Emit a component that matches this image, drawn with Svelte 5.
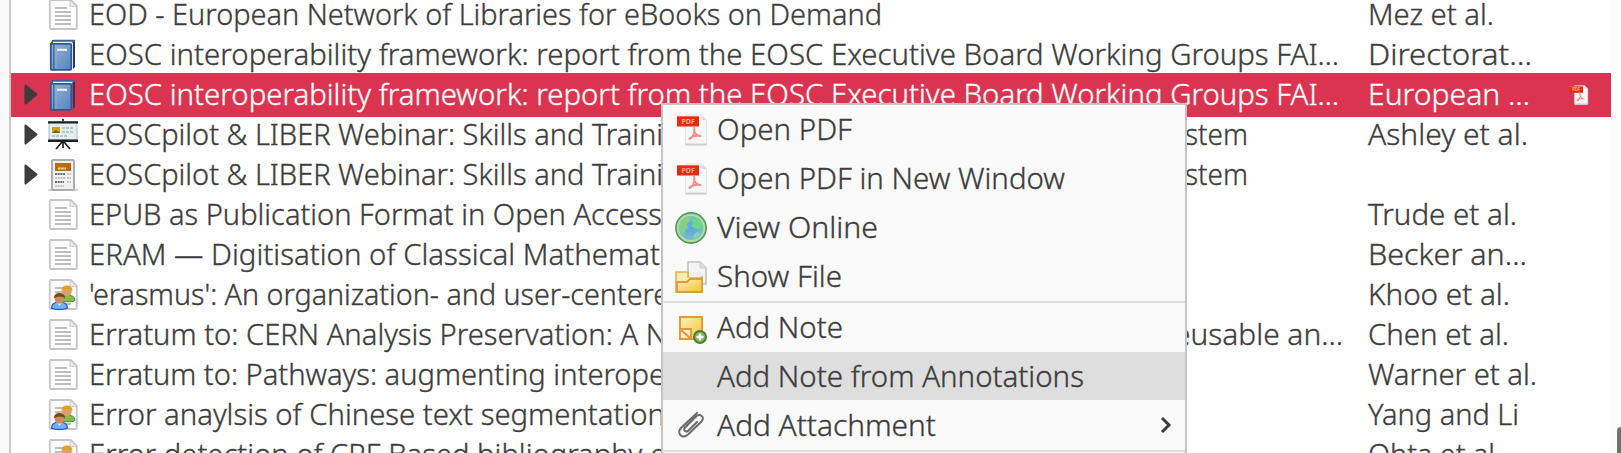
<script>
  // Each title is a list of visible runs: [text, start x inside the title column, ink width]
  const rows = [
    { icon: 'doc', runs: [['EOD - European Network of Libraries for eBooks on Demand', 0, 793]], by: ['Mez et al.', 126] },
    { icon: 'book', runs: [['EOSC interoperability framework: report from the EOSC Executive Board Working Groups FAI…', 0, 1250]], by: ['Directorat…', 164] },
    { icon: 'book', open: true, selected: true, pdf: true, runs: [['EOSC interoperability framework: report from the EOSC Executive Board Working Groups FAI…', 0, 1250]], by: ['European …', 162] },
    { icon: 'slides', open: true, runs: [['EOSCpilot & LIBER Webinar: Skills and Traini', 0, 574], ['stem', 1096, 63]], by: ['Ashley et al.', 160] },
    { icon: 'report', open: true, runs: [['EOSCpilot & LIBER Webinar: Skills and Traini', 0, 574], ['stem', 1096, 63]] },
    { icon: 'doc', runs: [['EPUB as Publication Format in Open Access', 0, 573]], by: ['Trude et al.', 149] },
    { icon: 'doc', runs: [['ERAM — Digitisation of Classical Mathemat', 0, 571]], by: ['Becker an…', 159] },
    { icon: 'people', runs: [["'erasmus': An organization- and user-centere", 0, 580]], by: ['Khoo et al.', 142] },
    { icon: 'doc', runs: [['Erratum to: CERN Analysis Preservation: A N', 0, 578], ['eusable an…', 1085, 169]], by: ['Chen et al.', 141] },
    { icon: 'doc', runs: [['Erratum to: Pathways: augmenting interope', 0, 576]], by: ['Warner et al.', 169] },
    { icon: 'people', runs: [['Error anaylsis of Chinese text segmentation', 0, 576]], by: ['Yang and Li', 151] },
    { icon: 'people', runs: [['Error detection of CRF Based bibliography e', 0, 577]], by: ['Ohta et al.', 134] }
  ];

  const menu = [
    { icon: 'pdf', label: 'Open PDF', w: 135 },
    { icon: 'pdf', label: 'Open PDF in New Window', w: 348 },
    { icon: 'globe', label: 'View Online', w: 161 },
    { icon: 'folder', label: 'Show File', w: 125 },
    { sep: true },
    { icon: 'note', label: 'Add Note', w: 126 },
    { label: 'Add Note from Annotations', w: 367, active: true },
    { icon: 'clip', label: 'Add Attachment', w: 219, more: true },
    { sep: true, last: true }
  ];

  // Condenses a run horizontally to the given width
  function fit(node, w) {
    node.style.transform = `scaleX(${w / node.getBoundingClientRect().width})`;
  }
</script>

{#snippet page()}
  <path d="M2 1h19l6 6v22a1 1 0 0 1-1 1H1a1 1 0 0 1-1-1V2a1 1 0 0 1 1-1z" transform="translate(.8 0)" fill="#fcfcfc" stroke="#c6c6c6" stroke-width="1.8" />
  <path d="M21 1.500v6h6" fill="#e8e8e8" stroke="#cfcfcf" stroke-width="1.200" />
  <path d="M6 9h12M6 13h16M6 17h16M6 21h16M6 25h16" stroke="#bdbdbd" stroke-width="1.800" />
{/snippet}

{#snippet pdf()}
  <path d="M9 1h16l5 5v24a1 1 0 0 1-1 1H10a1 1 0 0 1-1-1z" fill="#f7f7f7" stroke="#e2e2e2" />
  <path d="M25 1v5h5z" fill="#dcdcdc" />
  <path d="M9 30.500h21" stroke="#cdcdcd" stroke-width="1.800" />
  <rect x="0.500" y="2" width="22" height="10.500" fill="#e62a0c" />
  <path d="M.5 2.500h22" stroke="#f26b55" />
  <text x="5" y="9.800" class="tag">PDF</text>
  <path d="M17.500 13c1 4 .5 6.500-1.500 9.500-1 1.500-2 2.500-3 2.500M17.500 17c1 3 3.500 4.500 6.500 5M13.500 24c3-2 6-2.800 10.500-2" fill="none" stroke="#f3908a" stroke-width="2" stroke-linecap="round" />
{/snippet}

{#snippet icon(name)}
  <svg class="icon" viewBox="0 0 32 32" width="32" height="32">
    {#if name === 'doc'}
      <g transform="translate(2 0)">{@render page()}</g>
    {:else if name === 'people'}
      <g transform="translate(2 0)">{@render page()}</g>
      <path d="M15 22c0-4 3-6 6-6s7 1.500 7 5.500l-3 1.200h-9z" fill="#7fba52" stroke="#4f8a2b" />
      <circle cx="20" cy="12.500" r="4.800" fill="#d9a06a" />
      <path d="M14.500 12c0-4.500 3-5.500 5.500-5.500s5.500 1 5.500 5.500c-2-2.500-8-2.500-11 0z" fill="#e2a21f" />
      <path d="M4.500 29.300c0-4.500 3-6.300 8-6.300s8 1.800 8 6.300q-8 2.500-16 0z" fill="#6fb2f5" stroke="#2456b8" stroke-width="1.200" />
      <path d="M9.500 23l3 3.500 3-3.500z" fill="#fff" />
      <circle cx="12.500" cy="20" r="4.800" fill="#c98f63" />
      <path d="M7 19.500c0-4.500 3-5.500 5.500-5.500s5.500 1 5.500 5.500c-2-2.500-8-2.500-11 0z" fill="#7c4a14" />
    {:else if name === 'book'}
      <g transform="translate(1 0)">
        <path d="M4 1h23v27l-2 2V4H4z" fill="#243c5e" />
        <path d="M2 5.500V4L5.500.8H27v2z" fill="#3c6396" />
        <path d="M5 2.800h20l-1.500 2H5z" fill="#f0f1f2" />
        <rect x="2.800" y="4.800" width="20.500" height="26" rx="1" fill="url(#cover)" stroke="#33588f" stroke-width="1.800" />
        <path d="M5.800 6v24" stroke="#426ca3" stroke-width="1.500" />
        <path d="M8 6v23" stroke="#8aacd4" />
        <path d="M9 10.800h10" stroke="#f2f6fb" stroke-width="2" />
      </g>
    {:else if name === 'slides'}
      <g transform="translate(1 0)">
        <rect x="1" y="3" width="28" height="18" fill="#e2efee" stroke="#aabab9" />
        <path d="M0 3.400h30M0 21.700h30" stroke="#202020" stroke-width="2.400" />
        <path d="M15 0v3" stroke="#444" stroke-width="2" />
        <rect x="4" y="8" width="8" height="6" fill="#c9a20a" />
        <path d="M4 14l4-3 4 3z" fill="#765f12" />
        <path d="M14 9h12M14 13h12M4 17h16" stroke="#b4c6c5" stroke-width="2" stroke-dasharray="3 1" />
        <path d="M15 22v7M14 23l-6 7M16 23l6 7" stroke="#202020" stroke-width="1.700" />
      </g>
    {:else if name === 'report'}
      <path d="M1 31h30" stroke="#d4d4d4" stroke-width="2" />
      <rect x="5" y="1" width="22" height="30" rx="1" fill="#f1f1f1" stroke="#acacac" stroke-width="2" />
      <rect x="8" y="4" width="16" height="8" fill="#b96c0b" />
      <path d="M11 9.500h8" stroke="#f5dcae" stroke-width="2" stroke-dasharray="2.500 .7" />
      <path d="M8 15h10M8 23h9" stroke="#6a6a6a" stroke-width="1.800" stroke-dasharray="2 .7" />
      <path d="M8 19h10M8 27h9M20 15h4M20 19h4M20 23h4" stroke="#c4c4c4" stroke-width="2" stroke-dasharray="2 .7" />
    {:else if name === 'pdf'}
      <g transform="translate(1.500 0)">{@render pdf()}</g>
    {:else if name === 'globe'}
      <circle cx="16" cy="16" r="15" fill="url(#sea)" stroke="#51985a" stroke-width="1.800" />
      <circle cx="16" cy="16" r="13.200" fill="none" stroke="#b0dba0" stroke-width="2.200" />
      <path d="M5 12c2-5 6-8 10-8l1 4-4 4 1 4-3 2-1 6c-4-3-5-8-4-12z" fill="#83d08a" />
      <path d="M17 8c5-3 9 2 10 6-2 4-5 3-7 2l-4-2 3-2z" fill="#65de80" />
      <path d="M22 20l3 1-3 4-3 2-1-3z" fill="#8cd4a0" />
    {:else if name === 'folder'}
      <path d="M13 1h12l6 6v16H13z" fill="#f4f4f4" stroke="#c2c2c2" stroke-width="1.600" />
      <path d="M25 1v6h6" fill="#ddd" stroke="#c8c8c8" />
      <path d="M1 31V11h12v5h14v15z" fill="#faeab0" stroke="#e0b34d" stroke-width="1.700" />
      <path d="M14 11h12v5H14z" fill="#efefef" />
      <path d="M2 31V21h10l3-3h12v13z" fill="url(#gold)" stroke="#df9a3c" stroke-width="1.800" />
    {:else if name === 'note'}
      <rect x="5" y="5" width="22" height="22" fill="url(#gold)" stroke="#ec963d" stroke-width="2" />
      <path d="M5 17h11v10H5z" fill="#fff0cf" stroke="#e99339" stroke-width="1.800" />
      <path d="M6 18l9 8" stroke="#e99339" stroke-width="2.200" />
      <circle cx="25" cy="25" r="6" fill="#84b35b" stroke="#4c8034" stroke-width="2" />
      <path d="M21.500 25h7M25 21.500v7" stroke="#fff" stroke-width="2.300" />
    {:else if name === 'clip'}
      <path d="M22 4L6 19c-5 5.500 1.500 11.500 7 6.500L26.500 12.500c4-4.500-1.500-8.500-5.500-5L10 18.500c-2.500 3 1 5.500 3.500 3l8.500-8.500" fill="none" stroke="#6c6c6c" stroke-width="2" stroke-linecap="round" />
    {/if}
  </svg>
{/snippet}

<svg class="defs" width="0" height="0">
  <linearGradient id="cover" x1="0" y1="0" x2="1" y2="1"><stop offset="0" stop-color="#96b6d9" /><stop offset="1" stop-color="#5484bf" /></linearGradient>
  <linearGradient id="gold" x1="0" y1="0" x2="1" y2="1"><stop offset="0" stop-color="#fff1b8" /><stop offset="1" stop-color="#eec638" /></linearGradient>
  <radialGradient id="sea"><stop offset="0" stop-color="#58a6dd" /><stop offset="1" stop-color="#82c3c9" /></radialGradient>
</svg>

<main class="window">
  <section class="list">
    {#each rows as row}
      <div class="row" class:selected={row.selected}>
        <span class="twisty">
          {#if row.open}
            <svg viewBox="0 0 14 22" width="14" height="22"><path d="M1.500 1.500v18L12.500 10.500z" fill="#3d3d3d" stroke="#3d3d3d" stroke-width="2" stroke-linejoin="round" /></svg>
          {/if}
        </span>
        {@render icon(row.icon)}
        <span class="title">
          {#each row.runs as [text, x, w]}
            <span class="run" style:margin-left={x ? `${x}px` : null}><span class="fit" use:fit={w}>{text}</span></span>
          {/each}
        </span>
        <span class="creator">{#if row.by}<span class="fit" use:fit={row.by[1]}>{row.by[0]}</span>{/if}</span>
        {#if row.pdf}
          <svg class="attached" viewBox="0 0 32 32" width="20" height="20">{@render pdf()}</svg>
        {/if}
      </div>
    {/each}
  </section>
  <aside class="gutter"><i class="thumb"></i></aside>

  <nav class="menu">
    {#each menu as item}
      {#if item.sep}
        <hr class:last={item.last} />
      {:else}
        <div class="item" class:active={item.active} class:submenu={item.more}>
          <span class="slot">{#if item.icon}{@render icon(item.icon)}{/if}</span>
          <span class="label"><span class="fit" use:fit={item.w}>{item.label}</span></span>
          {#if item.more}
            <svg class="more" viewBox="0 0 12 18" width="12" height="18"><path d="M2 2l7 7-7 7" fill="none" stroke="#3d3d3d" stroke-width="3" /></svg>
          {/if}
        </div>
      {/if}
    {/each}
  </nav>
</main>

<style>
  .window {
    position: relative;
    display: flex;
    width: 1621px;
    height: 453px;
    overflow: hidden;
    background: #fafafa;
    color: #3d3d3d;
    font: 350 29px/40px "Noto Sans", sans-serif;
    -webkit-text-stroke: 0.35px currentColor;
    white-space: nowrap;
  }
  .defs { position: absolute; }
  .list {
    box-sizing: border-box;
    width: 1602px;
    margin-left: 9px;
    border-left: 2px solid #c8c8c8;
    background: #fff;
  }
  .row {
    display: flex;
    align-items: center;
    height: 40px;
  }
  .row:first-child { margin-top: -5px; }
  .selected {
    height: 44px;
    margin: -2px 0;
    background: #da3450;
    color: #fff;
  }
  .twisty {
    display: flex;
    width: 36px;
    padding-left: 13px;
    box-sizing: border-box;
  }
  .icon { flex: none; display: block; }
  .title {
    display: grid;
    width: 1267px;
    margin-left: 10px;
    padding-bottom: 2px;
  }
  .run {
    grid-area: 1 / 1;
    width: max-content;
    height: 40px;
  }
  .fit {
    display: inline-block;
    transform-origin: 0 50%;
  }
  .creator {
    width: 200px;
    height: 40px;
    margin-left: 12px;
    padding-bottom: 2px;
  }
  .attached { display: block; margin-left: 1px; -webkit-text-stroke: 0; }
  .gutter {
    display: flex;
    align-items: flex-end;
    justify-content: flex-end;
    width: 10px;
    background: #fdfdfd;
  }
  .thumb {
    width: 4px;
    height: 26px;
    border-radius: 5px 0 0 0;
    background: #707070;
  }
  .menu {
    position: absolute;
    left: 661px;
    top: 103px;
    width: 522px;
    height: 360px;
    border: 2px solid #c4c4c4;
    background: #fafafa;
  }
  .item {
    display: flex;
    align-items: center;
    height: 49px;
    padding: 0 13px 0 12px;
  }
  .active { background: #dedede; height: 48px; }
  .slot { width: 42px; }
  .label { flex: 1; height: 40px; padding-bottom: 2px; }
  .active .label, .submenu .label { padding-bottom: 0; }
  hr {
    height: 2px;
    margin: 0;
    border: 0;
    background: #dedede;
  }
  .last { margin-top: 1px; }
  .tag {
    font: 700 7px "Noto Sans", sans-serif;
    fill: #ffab9b;
    -webkit-text-stroke: 0;
  }
</style>
